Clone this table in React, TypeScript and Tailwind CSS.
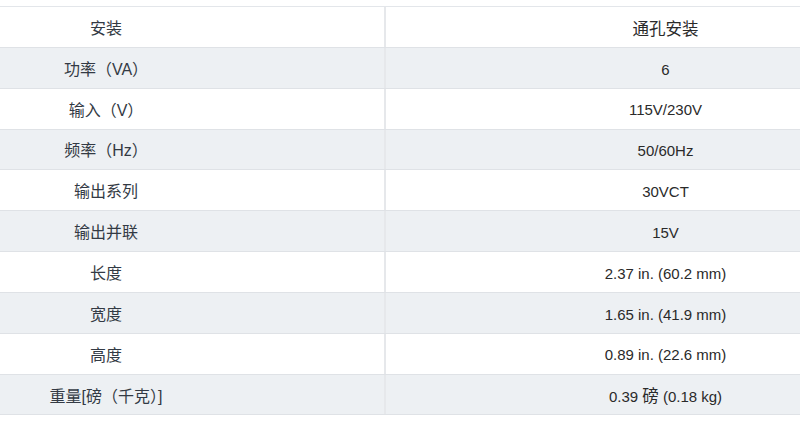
const SPECS: [string, string][] = [
  ['安装', '通孔安装'],
  ['功率（VA）', '6'],
  ['输入（V）', '115V/230V'],
  ['频率（Hz）', '50/60Hz'],
  ['输出系列', '30VCT'],
  ['输出并联', '15V'],
  ['长度', '2.37 in. (60.2 mm)'],
  ['宽度', '1.65 in. (41.9 mm)'],
  ['高度', '0.89 in. (22.6 mm)'],
  ['重量[磅（千克）]', '0.39 磅 (0.18 kg)'],
];

// CJK glyphs in the shot render a bit larger than the latin text
function Mixed({ text }: { text: string }) {
  const parts = text.split(/([\u3000-\u9fff\uff00-\uffef]+)/);
  return (
    <span>
      {parts.map((p, i) =>
        /[\u3000-\u9fff\uff00-\uffef]/.test(p)
          ? <span key={i} className="text-[16.5px]">{p}</span>
          : p
      )}
    </span>
  );
}

export default function App() {
  return (
    <div
      className="w-[800px] h-[421px] overflow-hidden bg-white"
      style={{ fontFamily: '"Liberation Sans", "Noto Sans CJK SC", sans-serif' }}
    >
      <div className="mt-[6px] ml-[-172px] w-[1117px] border-t border-[#e3e6ea]">
        {SPECS.map(([label, value], i) => (
          <div
            key={label}
            className={`grid grid-cols-[558px_559px] h-[40.85px] border-b border-[#dfe2e6]
                        ${i % 2 === 1 ? 'bg-[#edf0f3]' : 'bg-white'}`}
          >
            <div className="flex items-center justify-center pt-[4px] border-r-2 border-[#e6e8eb]
                            text-[16px] text-[#333a44]">
              <span>{label}</span>
            </div>
            <div className="flex items-center justify-center pt-[4px] text-[15px] text-[#2a2a2a]">
              <Mixed text={value} />
            </div>
          </div>
        ))}
      </div>
    </div>
  );
}
